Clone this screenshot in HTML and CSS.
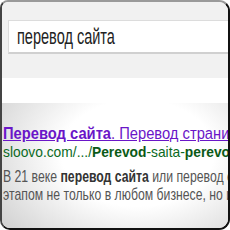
FILE: index.html
```html
<!DOCTYPE html>
<html lang="ru">
<head>
<meta charset="utf-8">
<link rel="stylesheet" href="styles.css">
</head>
<body>
<div class="frame">
  <div class="header">
    <div class="search"><span class="q">перевод сайта</span></div>
  </div>
  <div class="spacer"></div>
  <div class="results">
    <div class="title"><span class="sx"><b>Перевод сайта</b>. Перевод страниц</span></div>
    <div class="url"><span class="sx">sloovo.com/.../<b>Perevod</b>-saita-<b>perevod</b></span></div>
    <div class="desc first"><span class="sx">В 21 веке <b>перевод сайта</b> или перевод со</span></div>
    <div class="desc"><span class="sx">этапом не только в любом бизнесе, но и в</span></div>
  </div>
</div>
</body>
</html>
```
FILE: styles.css
```css
html, body { margin: 0; padding: 0; background: #fff; }
body { font-family: "Liberation Sans", Arial, sans-serif; }
.frame {
  width: 230px; height: 230px; box-sizing: border-box;
  border: 2px solid; border-color: #9a9a9a #111 #111 #444;
  border-radius: 8px 11px 11px 10px;
  overflow: hidden; display: flex; flex-direction: column;
  background: #fff;
}
.header { height: 76px; flex: none; background: #f1f1f1; padding: 18px 0 0 6px; box-sizing: border-box; }
.search {
  height: 34px; box-sizing: border-box; background: #fff;
  border: 1px solid #dcdcdc; border-right: none; border-bottom: 2px solid #d0d0d0;
  padding-left: 8px; white-space: nowrap; overflow: hidden;
}
.q { display: inline-block; font-size: 22px; line-height: 31px; color: #222; transform: scaleX(0.66); transform-origin: 0 50%; }
.spacer { height: 25px; flex: none; }
.results {
  flex: 1; padding: 22px 0 0 1px; white-space: nowrap; overflow: hidden;
  background: radial-gradient(ellipse 75% 95% at 60% 40%, #fff 45%, #d2d2d2 100%);
}
.sx { display: inline-block; transform-origin: 0 50%; }
.title { font-size: 16px; line-height: 18px; color: #6a16c8; }
.title .sx { text-decoration: underline; transform: scaleX(0.92); }
.url { font-size: 15px; line-height: 17px; color: #0a6a1e; }
.url .sx { transform: scaleX(0.92); }
.url b { color: #0b5a17; }
.desc { font-size: 17px; line-height: 18px; color: #555; }
.desc.first { margin-top: 8px; }
.desc b { color: #333; }
.desc .sx { transform: scaleX(0.72); }
```
